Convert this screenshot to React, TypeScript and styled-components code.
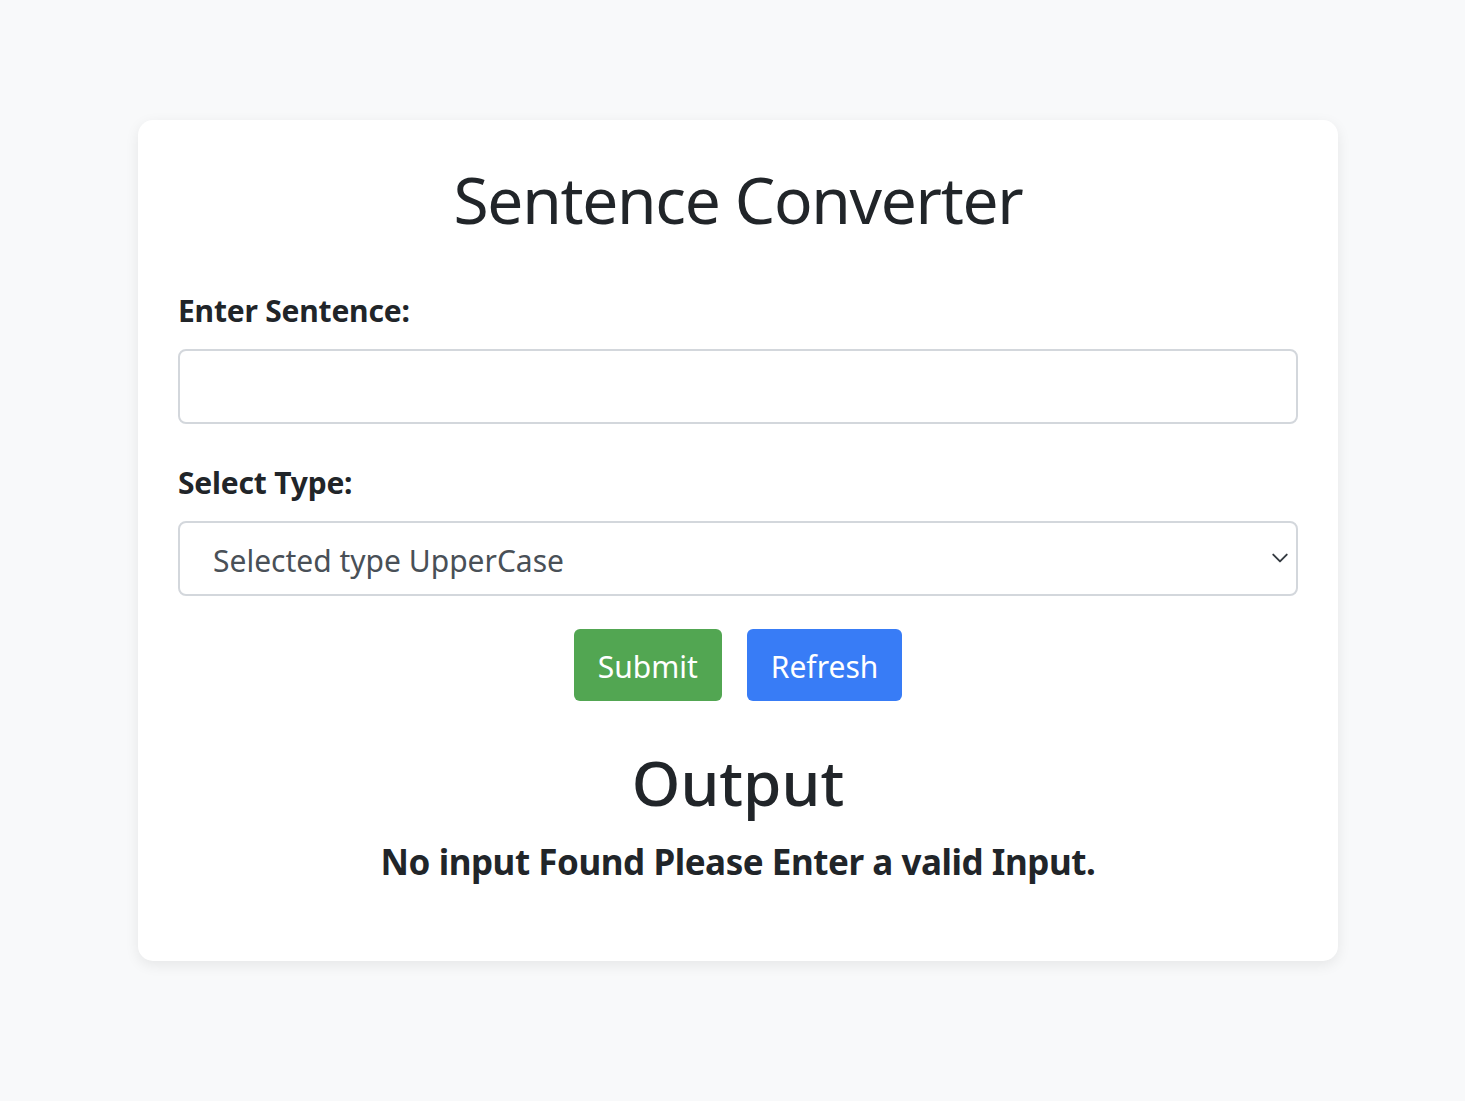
import styled, { createGlobalStyle } from 'styled-components';

const GlobalStyle = createGlobalStyle`
    body {
        margin: 0;
        background: #f8f9fa;
        font-family: "Noto Sans", "Open Sans", sans-serif;
        color: #212529;
    }
`

const Chevron = () => (
    <svg width="18" height="18" viewBox="0 0 16 16" fill="none">
        <path d="M2 5l6 6 6-6" stroke="#343a40" strokeWidth="1.7" strokeLinecap="round" strokeLinejoin="round" />
    </svg>
)

export default function App() {
    return (
        <Page>
            <GlobalStyle />
            <Card>
                <Title>Sentence Converter</Title>

                <Label htmlFor="sentence">Enter Sentence:</Label>
                <TextInput id="sentence" type="text" />

                <Label htmlFor="type" $top={36}>Select Type:</Label>
                <SelectWrap>
                    <Select id="type" defaultValue="upper">
                        <option value="upper">Selected type UpperCase</option>
                        <option value="lower">LowerCase</option>
                    </Select>
                    <Arrow><Chevron /></Arrow>
                </SelectWrap>

                <Buttons>
                    <Button $color="#52a652">Submit</Button>
                    <Button $color="#387cf6">Refresh</Button>
                </Buttons>

                <OutputTitle>Output</OutputTitle>
                <Message>No input Found Please Enter a valid Input.</Message>
            </Card>
        </Page>
    )
}

const Page = styled.div`
    min-height: 1101px;
    padding: 120px 0 0 11px;
    box-sizing: border-box;
`

const Card = styled.div`
    width: 1200px;
    margin: 0 auto;
    box-sizing: border-box;
    padding: 40px;
    background: #fff;
    border-radius: 15px;
    box-shadow: 0 4px 14px rgba(0, 0, 0, 0.08);
    display: flex;
    flex-direction: column;
`

const Title = styled.h1`
    margin: 2px 0 49px;
    font-size: 64px;
    font-weight: 400;
    letter-spacing: -1.3px;
    line-height: 1.2;
    text-align: center;
`

const Label = styled.label<{ $top?: number }>`
    display: block;
    margin-top: ${p => p.$top ?? 0}px;
    margin-bottom: 16px;
    font-size: 30px;
    font-weight: 700;
    letter-spacing: -0.2px;
    line-height: 1.5;
`

const TextInput = styled.input`
    display: block;
    height: 75px;
    box-sizing: border-box;
    border: 2px solid #d3d7dc;
    border-radius: 8px;
    padding: 0 33px;
    font: inherit;
    font-size: 30px;
    outline: none;
`

const SelectWrap = styled.div`
    position: relative;
`

const Select = styled.select`
    display: block;
    width: 100%;
    height: 75px;
    box-sizing: border-box;
    appearance: none;
    background: #fff;
    border: 2px solid #d3d7dc;
    border-radius: 8px;
    padding: 4px 60px 0 33px;
    font-family: inherit;
    font-size: 30px;
    color: #495057;
    outline: none;
`

const Arrow = styled.span`
    position: absolute;
    right: 9px;
    top: 50%;
    transform: translateY(-50%);
    display: flex;
    pointer-events: none;
`

const Buttons = styled.div`
    display: flex;
    justify-content: center;
    gap: 25px;
    margin-top: 33px;
`

const Button = styled.button<{ $color: string }>`
    height: 72px;
    padding: 3px 24px 0;
    border: none;
    border-radius: 6px;
    background: ${p => p.$color};
    color: #fff;
    font-family: inherit;
    font-size: 30px;
    line-height: 1.5;
    cursor: pointer;
`

const OutputTitle = styled.h2`
    margin: 44px 0 22px;
    font-size: 62px;
    font-weight: 500;
    line-height: 1.2;
    text-align: center;
`

const Message = styled.h4`
    margin: 0 0 38px;
    font-size: 35px;
    font-weight: 700;
    letter-spacing: -0.45px;
    line-height: 1.2;
    text-align: center;
`
